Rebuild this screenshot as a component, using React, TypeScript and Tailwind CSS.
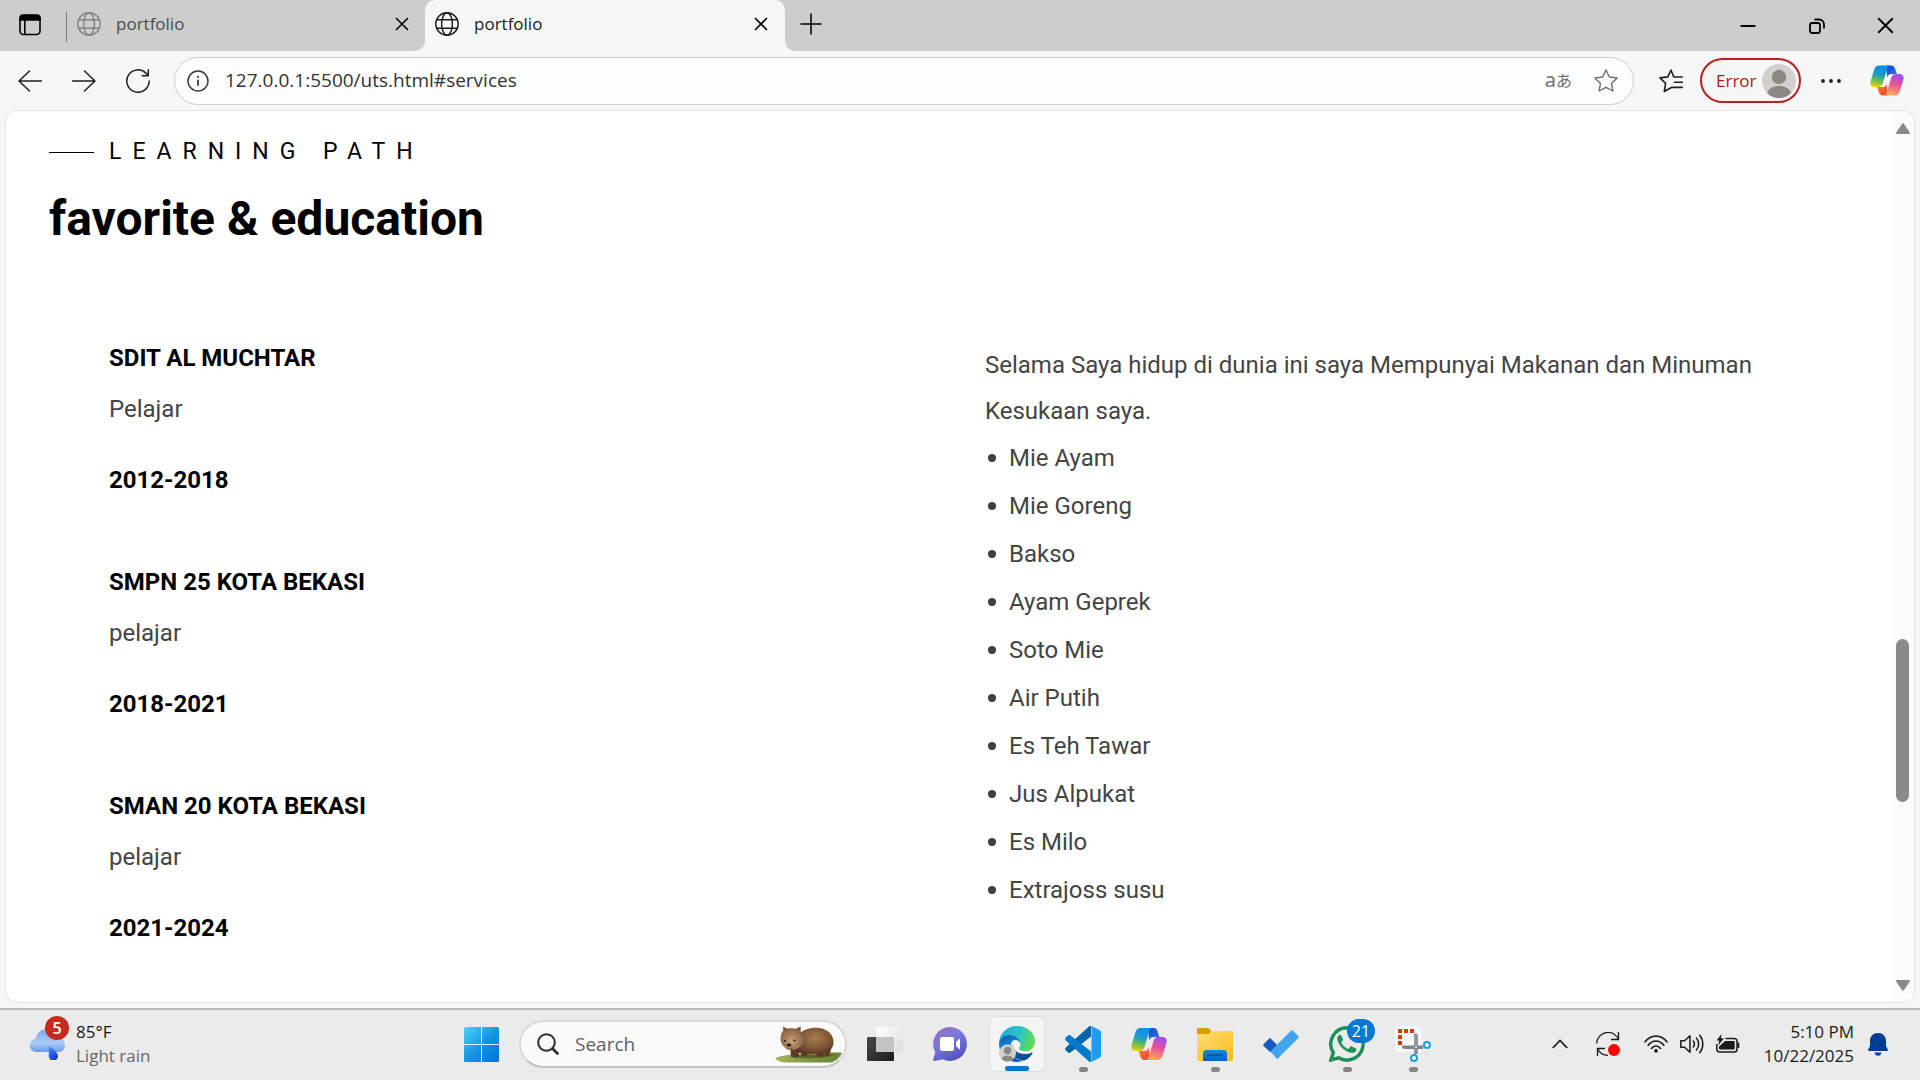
import type { ReactNode } from "react";

const schools = [
  { name: "SDIT AL MUCHTAR", role: "Pelajar", years: "2012-2018" },
  { name: "SMPN 25 KOTA BEKASI", role: "pelajar", years: "2018-2021" },
  { name: "SMAN 20 KOTA BEKASI", role: "pelajar", years: "2021-2024" },
];

const favorites = [
  "Mie Ayam",
  "Mie Goreng",
  "Bakso",
  "Ayam Geprek",
  "Soto Mie",
  "Air Putih",
  "Es Teh Tawar",
  "Jus Alpukat",
  "Es Milo",
  "Extrajoss susu",
];

function GlobeIcon() {
  return (
    <svg viewBox="0 0 24 24" className="size-6 shrink-0" fill="none" stroke="currentColor" strokeWidth="1.4">
      <circle cx="12" cy="12" r="11.2" />
      <ellipse cx="12" cy="12" rx="5.4" ry="11.2" />
      <path d="M1.6 7.8h20.8M1.6 16.2h20.8" />
    </svg>
  );
}

function CrossIcon({ className }: { className: string }) {
  return (
    <svg viewBox="0 0 14 14" className={className} fill="none" stroke="currentColor" strokeWidth="1.6">
      <path d="M1 1l12 12M13 1L1 13" />
    </svg>
  );
}

function CopilotIcon({ className, id }: { className: string; id: string }) {
  return (
    <svg viewBox="0 0 36 32" className={className}>
      <defs>
        <linearGradient id={id + "a"} x1="0.4" y1="0" x2="0.2" y2="1">
          <stop offset="0" stopColor="#0d8fe8" />
          <stop offset="0.4" stopColor="#1a9cc8" />
          <stop offset="0.7" stopColor="#6fbf4a" />
          <stop offset="1" stopColor="#f5d10a" />
        </linearGradient>
        <linearGradient id={id + "b"} x1="0.7" y1="0" x2="0.4" y2="1">
          <stop offset="0" stopColor="#9a4ff2" />
          <stop offset="0.45" stopColor="#e8509a" />
          <stop offset="1" stopColor="#ffab5a" />
        </linearGradient>
        <linearGradient id={id + "c"} x1="0" y1="0" x2="1" y2="1">
          <stop offset="0" stopColor="#1b3fc4" />
          <stop offset="1" stopColor="#2a80e8" />
        </linearGradient>
        <linearGradient id={id + "d"} x1="0" y1="0" x2="1" y2="1">
          <stop offset="0" stopColor="#ff8a3c" />
          <stop offset="1" stopColor="#e63a2a" />
        </linearGradient>
      </defs>
      <path d="M17 0h5.500c2.500 0 3.500 1.600 4.200 3.800l1.700 5.200H23c-3 0-4 1-4.800 3.500z" fill={`url(#${id}c)`} />
      <path d="M19 32h-5.500c-2.500 0-3.500-1.600-4.200-3.800L7.600 23H13c3 0 4-1 4.800-3.500z" fill={`url(#${id}d)`} />
      <path d="M9.500 0H22c-2 0-3 1.400-3.700 3.600L13.500 19c-.8 2.600-2 4-4.500 4H4.500C1 23-.3 20 .7 16.500L4.600 4C5.400 1.300 7 0 9.500 0z" fill={`url(#${id}a)`} />
      <path d="M26.500 32H14c2 0 3-1.400 3.700-3.600L22.500 13c.8-2.600 2-4 4.500-4h4.500c3.500 0 4.800 3 3.800 6.500L31.400 28c-.8 2.700-2.400 4-4.900 4z" fill={`url(#${id}b)`} />
    </svg>
  );
}

function Avatar({ className }: { className: string }) {
  return (
    <svg viewBox="0 0 34 34" className={className}>
      <circle cx="17" cy="17" r="17" fill="#d3d1cd" />
      <circle cx="17" cy="13" r="7.200" fill="#8b8783" />
      <path d="M5 29c1.500-4.500 6-7 12-7s10.500 2.500 12 7c-3 3.200-7.500 5-12 5s-9-1.800-12-5z" fill="#8b8783" />
    </svg>
  );
}

function TabStrip() {
  return (
    <header className="flex h-[51px] shrink-0 items-stretch bg-[#cdcdcd]">
      <button aria-label="Tab actions" className="ml-[18px] flex w-12 items-center pb-0.5">
        <svg viewBox="0 0 24 24" className="size-6" fill="none" stroke="#000" strokeWidth="1.600">
          <rect x="2" y="2.500" width="20" height="19" rx="3.500" />
          <path d="M2 7V5a3 3 0 0 1 3-3h14a3 3 0 0 1 3 3v2z" fill="#000" />
          <path d="M6.800 7v14" />
        </svg>
      </button>
      <div className="mt-3 h-[30px] w-px bg-[#7a7a7a]" />
      <div className="flex w-[358px] items-center pb-1 pl-2.5 pr-4 text-[#4b4b4b]">
        <span className="text-[#848484]">
          <GlobeIcon />
        </span>
        <span className="ml-[15px] flex-1 text-[17px]">portfolio</span>
        <button aria-label="Close tab" className="text-black">
          <CrossIcon className="size-[14px]" />
        </button>
      </div>
      <div className="relative flex w-[360px] items-center rounded-t-[10px] bg-[#f7f7f7] pb-1 pl-2.5 pr-[17px] text-[#1b1b1b]">
        <div className="absolute -left-2.5 bottom-0 size-2.5 bg-[#f7f7f7]">
          <div className="size-full rounded-br-[10px] bg-[#cdcdcd]" />
        </div>
        <div className="absolute -right-2.5 bottom-0 size-2.5 bg-[#f7f7f7]">
          <div className="size-full rounded-bl-[10px] bg-[#cdcdcd]" />
        </div>
        <GlobeIcon />
        <span className="ml-[15px] flex-1 text-[17px]">portfolio</span>
        <button aria-label="Close tab" className="text-black">
          <CrossIcon className="size-[14px]" />
        </button>
      </div>
      <button aria-label="New tab" className="ml-[15px] flex items-center pb-1">
        <svg viewBox="0 0 22 22" className="size-[22px]" stroke="#000" strokeWidth="1.500">
          <path d="M11 .5v21M.5 11h21" />
        </svg>
      </button>
      <div className="ml-auto flex items-center">
        <button aria-label="Minimize" className="flex w-[69px] justify-center">
          <svg viewBox="0 0 16 16" className="size-4" stroke="#000" strokeWidth="2">
            <path d="M.5 8h15" />
          </svg>
        </button>
        <button aria-label="Restore" className="flex w-[69px] justify-center">
          <svg viewBox="0 0 16 16" className="size-4" fill="none" stroke="#000" strokeWidth="1.800">
            <rect x="1" y="5" width="10" height="10" rx="2.200" />
            <path d="M5.500 1.500H10A5 5 0 0 1 15 6.500V10.500" />
          </svg>
        </button>
        <button aria-label="Close" className="flex w-[69px] justify-center">
          <CrossIcon className="size-[17px]" />
        </button>
      </div>
    </header>
  );
}

function Toolbar() {
  return (
    <nav className="flex h-[59px] shrink-0 items-center bg-[#f7f7f7] pl-[18px] text-[#1f1f1f]">
      <button aria-label="Back">
        <svg viewBox="0 0 24 24" className="size-6" fill="none" stroke="currentColor" strokeWidth="1.500" strokeLinecap="round" strokeLinejoin="round">
          <path d="M23.500 12H1M11.500 2L1 12l10.500 10" />
        </svg>
      </button>
      <button aria-label="Forward" className="ml-[30px]">
        <svg viewBox="0 0 24 24" className="size-6" fill="none" stroke="currentColor" strokeWidth="1.500" strokeLinecap="round" strokeLinejoin="round">
          <path d="M.5 12H23M12.500 2L23 12 12.500 22" />
        </svg>
      </button>
      <button aria-label="Refresh" className="ml-[30px]">
        <svg viewBox="0 0 24 24" className="size-6" fill="none" stroke="currentColor" strokeWidth="1.500" strokeLinecap="round" strokeLinejoin="round">
          <path d="M23.200 12A11.200 11.200 0 1 1 20 4.200L22.200 6.500M22.300.8v5.900h-6" />
        </svg>
      </button>
      <div className="ml-6 flex h-12 flex-1 items-center rounded-full border border-[#cfcfcf] bg-[#fdfdfd] pl-3 pr-[15px]">
        <button aria-label="Site information">
          <svg viewBox="0 0 22 22" className="size-[22px]" fill="none" stroke="#3a3a3a" strokeWidth="1.500">
            <circle cx="11" cy="11" r="10" />
            <path d="M11 9.800v6" strokeWidth="1.800" />
            <circle cx="11" cy="6.800" r="1.100" fill="#3a3a3a" stroke="none" />
          </svg>
        </button>
        <input
          aria-label="Address"
          defaultValue="127.0.0.1:5500/uts.html#services"
          className="ml-4 min-w-0 flex-1 bg-transparent text-[19px] text-[#333] outline-none"
        />
        <button aria-label="Translate" className="flex items-baseline font-['Noto_Sans','Noto_Sans_CJK_JP',sans-serif] leading-6 text-[#6e6e6e]">
          <span className="text-[20px]">a</span>
          <span className="text-[16px]">あ</span>
        </button>
        <button aria-label="Add to favorites" className="ml-[22px]">
          <svg viewBox="0 0 24 24" className="size-6" fill="none" stroke="#6e6e6e" strokeWidth="1.400" strokeLinejoin="round">
            <path d="M12 1l3.400 7 7.700 1-5.600 5.400 1.400 7.600-6.900-3.700L5.100 22l1.400-7.600L.9 9l7.700-1z" />
          </svg>
        </button>
      </div>
      <button aria-label="Favorites" className="ml-[25px]">
        <svg viewBox="0 0 24 24" className="size-6" fill="none" stroke="currentColor" strokeWidth="1.600" strokeLinecap="round" strokeLinejoin="round">
          <path d="M15.500 7.800l-.9-.1L12 1 8.800 7.900 1 8.900l5.600 5.400L5.300 22.500l6.700-3.800M15.500 8H23.300M15.500 13.200H23.300M12.500 18.400H23.300" />
        </svg>
      </button>
      <button className="ml-[17px] flex h-[45px] w-[101px] items-center justify-between rounded-full border-2 border-[#b81f1f] pl-[14px] pr-[3px] text-[17px] text-[#b01818]">
        Error
        <Avatar className="size-[34px]" />
      </button>
      <button aria-label="Settings and more" className="ml-5">
        <svg viewBox="0 0 20 4" className="h-1 w-5" fill="#1f1f1f">
          <circle cx="2" cy="2" r="1.900" />
          <circle cx="10" cy="2" r="1.900" />
          <circle cx="18" cy="2" r="1.900" />
        </svg>
      </button>
      <button aria-label="Copilot" className="ml-[29px] mr-4">
        <CopilotIcon className="h-[31px] w-[34px]" id="bar" />
      </button>
    </nav>
  );
}

function Page() {
  return (
    <main className="flex min-h-0 flex-1 bg-[#f7f7f7] px-[5px] pb-[5px]">
      <div className="flex flex-1 overflow-hidden rounded-[12px] border border-[#e4e4e4] bg-white font-[Roboto,sans-serif]">
        <section className="flex-1 pl-[43px] pr-[30px] pt-6">
          <div className="flex items-center gap-[15px]">
            <div className="h-px w-[45px] bg-black" />
            <p className="text-[23px] leading-[34px] tracking-[11px] text-black">LEARNING PATH</p>
          </div>
          <h1 className="mt-5 text-[48px] font-bold leading-[60px] text-black">favorite &amp; education</h1>
          <div className="mt-[91px] grid grid-cols-2 pl-[60px] text-[24px]">
            <div className="flex flex-col gap-[66px]">
              {schools.map((s) => (
                <article key={s.name}>
                  <h2 className="font-bold leading-[36px] text-black">{s.name}</h2>
                  <p className="mt-2.5 leading-[46px] text-[#444]">{s.role}</p>
                  <h3 className="mt-[30px] font-bold leading-[36px] text-black">{s.years}</h3>
                </article>
              ))}
            </div>
            <div className="pr-10 pt-0.5 text-[#444]">
              <p className="leading-[46px]">Selama Saya hidup di dunia ini saya Mempunyai Makanan dan Minuman Kesukaan saya.</p>
              <ul className="leading-[48px]">
                {favorites.map((f) => (
                  <li
                    key={f}
                    className="flex items-center before:ml-[3px] before:mr-[13px] before:size-2 before:rounded-full before:bg-[#3f3f3f]"
                  >
                    {f}
                  </li>
                ))}
              </ul>
            </div>
          </div>
        </section>
        <div className="flex w-[23px] flex-col items-center bg-[#fcfcfc] pb-[11px] pt-3">
          <button aria-label="Scroll up">
            <svg viewBox="0 0 14 11" className="h-[11px] w-[14px]" fill="#8a8a8a" stroke="#8a8a8a" strokeWidth="2" strokeLinejoin="round">
              <path d="M7 1.200L13 10H1z" />
            </svg>
          </button>
          <div className="flex w-[13px] flex-1 flex-col">
            <div className="flex-[503]" />
            <div className="flex-[162] rounded-full bg-[#8a8a8a]" />
            <div className="flex-[177]" />
          </div>
          <button aria-label="Scroll down">
            <svg viewBox="0 0 14 11" className="h-[11px] w-[14px]" fill="#8a8a8a" stroke="#8a8a8a" strokeWidth="2" strokeLinejoin="round">
              <path d="M7 9.800L1 1h12z" />
            </svg>
          </button>
        </div>
      </div>
    </main>
  );
}

function TaskbarApp({ label, state, children }: { label: string; state?: "active" | "running"; children: ReactNode }) {
  return (
    <button
      aria-label={label}
      className={
        state === "active"
          ? "relative flex size-14 items-center justify-center rounded-[6px] border border-[#dedede] bg-[#f4f4f4]"
          : "relative flex size-14 items-center justify-center"
      }
    >
      {children}
      {state === "active" && <span className="absolute bottom-0 h-[5px] w-6 rounded-full bg-[#0078d4]" />}
      {state === "running" && <span className="absolute bottom-0 h-[5px] w-[9px] rounded-full bg-[#868686]" />}
    </button>
  );
}

function Wombat() {
  return (
    <svg viewBox="0 0 67 37" className="h-[37px] w-[67px]">
      <defs>
        <radialGradient id="fur" cx="0.5" cy="0.4" r="0.65">
          <stop offset="0" stopColor="#a97c50" />
          <stop offset="0.6" stopColor="#7f5735" />
          <stop offset="1" stopColor="#553520" />
        </radialGradient>
        <radialGradient id="face" cx="0.5" cy="0.6" r="0.6">
          <stop offset="0" stopColor="#c9a27c" />
          <stop offset="1" stopColor="#85603f" />
        </radialGradient>
        <linearGradient id="grass" x1="0" y1="0" x2="1" y2="0">
          <stop offset="0" stopColor="#a9b559" />
          <stop offset="0.5" stopColor="#7c9440" />
          <stop offset="1" stopColor="#6b8433" />
        </linearGradient>
      </defs>
      <path d="M0 32c8-3 18-4 30-4.500 14-.7 26-1.500 37-.8-2 4.500-6 8.300-11 9.800H12C6 36.500 2 35 0 32z" fill="url(#grass)" />
      <path d="M14 31c8-2.500 38-3 46-2-6 3-36 4.500-46 2z" fill="#3f4a1c" opacity="0.600" />
      <path d="M15 20h8l1 10c-2 1.600-6 1.600-8 0zM26 21h6l.5 8.500c-1.500 1.200-4 1.200-6 .5zM41 21h8l-.5 9c-2 1.500-5 1.500-7 0zM50 19h7l-2.500 10c-1.500 1.200-3.500 1-5 .3z" fill="#5c3a22" />
      <path d="M24 8c5-5 13-7 20-6 9 1 14.500 7 14.500 14 0 7-5 11-13 11.500-9 .8-19 .8-24-1.500z" fill="url(#fur)" />
      <path d="M8.500 6L8 .8l5 2.500zM21 3l4.500-2.500L25.500 6z" fill="#6c4b33" stroke="#a98465" strokeWidth="0.600" />
      <path d="M9 4c4-2.500 12-2.500 15.500.3C28 8 29 14 27 18.500c-2 4-7 6-12 5C9 22.500 5.500 18 5.500 13 5.500 9 6.500 6 9 4z" fill="url(#face)" />
      <circle cx="9.800" cy="15" r="1.100" fill="#2b1a10" />
      <circle cx="19.500" cy="14.500" r="1.100" fill="#2b1a10" />
      <ellipse cx="14" cy="19" rx="2.300" ry="1.600" fill="#2b1a10" />
      <path d="M11 22.500c2 1 4.500 1 6.500-.3" fill="none" stroke="#5c3a22" strokeWidth="0.800" />
    </svg>
  );
}

function EdgeIcon() {
  return (
    <svg viewBox="0 0 36 36" className="size-9">
      <defs>
        <linearGradient id="edgeTop" x1="0" y1="0.3" x2="1" y2="0.6">
          <stop offset="0" stopColor="#1fa7d8" />
          <stop offset="0.5" stopColor="#2cc3c9" />
          <stop offset="1" stopColor="#63dc4a" />
        </linearGradient>
        <linearGradient id="edgeMid" x1="0" y1="0" x2="0.4" y2="1">
          <stop offset="0" stopColor="#0c59a4" />
          <stop offset="0.5" stopColor="#0f86dc" />
          <stop offset="1" stopColor="#1160b8" />
        </linearGradient>
      </defs>
      <path d="M0 18C0 7.500 8 0 18 0c10.500 0 18 7 18 15.500 0 6-4.500 9.700-9.500 9.700-4 0-6.500-1.200-6.500-2.700 0-1 1.500-1.700 1.500-4.300C21.500 13 17 9 11 9 5 9 .8 12.500 0 18z" fill="url(#edgeTop)" />
      <path d="M0 18C.8 12.300 5 9 11 9c6.200 0 10.500 4.200 10.500 9.200-1-3-3-4.200-5.200-4.200-3 0-4.800 3-4.800 7C11.500 28.500 17 34 23.500 35c-1.700.7-3.600 1-5.500 1C8 36 0 28 0 18z" fill="url(#edgeMid)" />
      <path d="M11.500 21c0 8 6.500 14 14 13.600 3.500-1.600 6.300-4.200 8-7.400.3-.7-.2-1.100-.8-.8-2 1-4.300 1.600-6.700 1.600-6.500 0-12-3.500-12.700-9-1 .5-1.800 1.200-1.800 2z" fill="#114c96" />
      <g transform="translate(0 18.500) scale(0.5)">
        <circle cx="17" cy="17" r="17" fill="#d3d1cd" />
        <circle cx="17" cy="12" r="7.500" fill="#8b8783" />
        <path d="M5 29c1.500-4.500 6-7 12-7s10.500 2.500 12 7c-3 3.200-7.500 5-12 5s-9-1.800-12-5z" fill="#8b8783" />
      </g>
    </svg>
  );
}

function Taskbar() {
  return (
    <footer className="grid h-[72px] shrink-0 grid-cols-[1fr_auto_1fr] border-t-2 border-[#bababa] bg-[#ebebeb] pb-0.5">
      <button className="flex items-center pl-[29px] text-left">
        <span className="relative">
          <svg viewBox="0 0 36 32" className="h-8 w-9">
            <defs>
              <linearGradient id="cloud" x1="0" y1="0" x2="0" y2="1">
                <stop offset="0" stopColor="#7ea6ea" />
                <stop offset="0.6" stopColor="#a9cbf8" />
                <stop offset="1" stopColor="#6f9be6" />
              </linearGradient>
              <linearGradient id="drop" x1="0" y1="0" x2="0.6" y2="1">
                <stop offset="0" stopColor="#3f9bf5" />
                <stop offset="1" stopColor="#1632e0" />
              </linearGradient>
            </defs>
            <path d="M7 24a7 6.700 0 0 1-.5-13.300C8 5 12 1 17 1c5.500 0 9 3.500 10.500 8.500C32.500 9.500 36 12.500 36 17s-3 7-7 7z" fill="url(#cloud)" />
            <path d="M20 18c3 2.500 9 6.500 9 10a4.600 4.600 0 0 1-9.300 0z" fill="url(#drop)" />
          </svg>
          <span className="absolute -top-3 left-4 flex size-6 items-center justify-center rounded-full bg-[#c42b1c] text-[16px] font-semibold text-white">5</span>
        </span>
        <span className="ml-[11px] flex flex-col text-[17px] leading-6">
          <span className="text-[#1b1b1b]">85°F</span>
          <span className="text-[#666]">Light rain</span>
        </span>
      </button>

      <div className="flex items-center gap-2.5 pr-[26px]">
        <TaskbarApp label="Start">
          <svg viewBox="0 0 35 35" className="size-[35px]">
            <defs>
              <linearGradient id="win" gradientUnits="userSpaceOnUse" x1="0" y1="0" x2="35" y2="35">
                <stop offset="0" stopColor="#4fd3fe" />
                <stop offset="0.5" stopColor="#1695e3" />
                <stop offset="1" stopColor="#0072d0" />
              </linearGradient>
            </defs>
            <path d="M1.500 0H17v17H0V1.500A1.500 1.500 0 0 1 1.500 0zM18 0h15.500A1.500 1.500 0 0 1 35 1.500V17H18zM0 18h17v17H1.500A1.500 1.500 0 0 1 0 33.500zM18 18h17v15.500a1.500 1.500 0 0 1-1.500 1.500H18z" fill="url(#win)" />
          </svg>
        </TaskbarApp>
        <label className="flex h-12 w-[328px] items-center rounded-full border-2 border-[#dadada] border-b-[#c2c2c2] bg-[#fafafa] pl-4 pr-[3px]">
          <svg viewBox="0 0 22 22" className="size-[22px] shrink-0" fill="none" stroke="#2b2b2b" strokeLinecap="round">
            <circle cx="9.500" cy="9.500" r="8.300" strokeWidth="2" />
            <path d="M15.500 15.500l5 5" strokeWidth="2.600" />
          </svg>
          <input aria-label="Search" placeholder="Search" className="ml-4 min-w-0 flex-1 bg-transparent text-[19px] outline-none placeholder:text-[#5f5f5f]" />
          <Wombat />
        </label>
        <TaskbarApp label="Task view">
          <svg viewBox="0 0 36 34" className="h-[34px] w-9">
            <defs>
              <linearGradient id="tvd" x1="0" y1="0" x2="1" y2="1">
                <stop offset="0" stopColor="#4a4846" />
                <stop offset="1" stopColor="#1c1c1c" />
              </linearGradient>
              <linearGradient id="tvl" x1="0" y1="0" x2="1" y2="1">
                <stop offset="0" stopColor="#fff" />
                <stop offset="1" stopColor="#dcdcdc" />
              </linearGradient>
            </defs>
            <rect x="0" y="10" width="27" height="24" rx="1" fill="url(#tvd)" />
            <rect x="9" y="0" width="27" height="25" rx="1" fill="url(#tvl)" />
            <rect x="9" y="10" width="18" height="15" fill="#c3c3c3" />
          </svg>
        </TaskbarApp>
        <TaskbarApp label="Chat">
          <svg viewBox="0 0 36 34" className="h-[34px] w-9">
            <defs>
              <linearGradient id="chat" x1="0.1" y1="0" x2="0.6" y2="1">
                <stop offset="0" stopColor="#9a6aa8" />
                <stop offset="0.4" stopColor="#7c7be0" />
                <stop offset="1" stopColor="#5452c4" />
              </linearGradient>
            </defs>
            <path d="M17 0a17 17 0 1 1-7.500 32.300L1.500 34c-.9.200-1.600-.6-1.300-1.500l2-7.300A17 17 0 0 1 17 0z" fill="url(#chat)" />
            <rect x="7" y="10" width="14" height="14" rx="2" fill="#fff" />
            <path d="M23 15l3.300-3.300c.4-.4.700-.2.700.3v10c0 .5-.3.700-.7.300L23 19z" fill="#fff" />
          </svg>
        </TaskbarApp>
        <TaskbarApp label="Microsoft Edge" state="active">
          <EdgeIcon />
        </TaskbarApp>
        <TaskbarApp label="Visual Studio Code" state="running">
          <svg viewBox="0 0 36 36" className="size-9">
            <path d="M26 0v10.500L5.500 26.500c-.8.600-1.800.6-2.500 0L.8 24.500c-.9-.8-.9-2.200 0-3L24 .6c.6-.5 1.300-.7 2-.6z" fill="#0065a9" />
            <path d="M26 36V25.500L5.500 9.500c-.8-.6-1.800-.6-2.500 0L.8 11.500c-.9.800-.9 2.200 0 3L24 35.400c.6.500 1.300.7 2 .6z" fill="#007acc" />
            <path d="M26.500 35.800c-.8.300-1.800.1-2.500-.6.900.9 2.500.2 2.500-1.100V1.900C26.500.6 24.900-.1 24 .8c.7-.7 1.700-.9 2.500-.6L34 3.800c1.200.6 2 1.800 2 3.200v22c0 1.400-.8 2.600-2 3.200z" fill="#1f9cf0" />
          </svg>
        </TaskbarApp>
        <TaskbarApp label="Copilot">
          <CopilotIcon className="h-[34px] w-9" id="task" />
        </TaskbarApp>
        <TaskbarApp label="File Explorer" state="running">
          <svg viewBox="0 0 36 33" className="h-[33px] w-9">
            <defs>
              <linearGradient id="folder" x1="0" y1="0" x2="1" y2="1">
                <stop offset="0" stopColor="#ffdf72" />
                <stop offset="1" stopColor="#fcba1c" />
              </linearGradient>
              <linearGradient id="tray" x1="0" y1="0" x2="0" y2="1">
                <stop offset="0" stopColor="#1687d8" />
                <stop offset="1" stopColor="#0a62b4" />
              </linearGradient>
            </defs>
            <path d="M0 1.200C0 .5.500 0 1.200 0h9.600c.6 0 1 .2 1.400.6L15 4v4H0z" fill="#dd9a08" />
            <path d="M0 6h11c.6 0 1-.2 1.400-.6L14 3.600c.4-.4.800-.6 1.400-.6h19.400c.7 0 1.200.5 1.200 1.200v27.600c0 .7-.5 1.200-1.200 1.200H1.200C.5 33 0 32.500 0 31.800z" fill="url(#folder)" />
            <path d="M6 33v-7.500A3.500 3.500 0 0 1 9.500 22h17a3.500 3.500 0 0 1 3.500 3.500V33z" fill="url(#tray)" />
            <path d="M11 27.200h14" stroke="#0a4a8c" strokeWidth="1.600" strokeLinecap="round" />
          </svg>
        </TaskbarApp>
        <TaskbarApp label="To Do">
          <svg viewBox="0 0 36 29" className="h-[29px] w-9">
            <path d="M.6 14.200L6 8.800c.6-.6 1.300-.6 1.900 0l6.800 6.700-7 7L.6 16c-.6-.6-.6-1.200 0-1.800z" fill="#185abd" />
            <path d="M7.500 21.200L28 .7c.6-.6 1.300-.6 1.900 0l5.400 5.400c.6.600.6 1.300 0 1.900L15.100 28.200c-.6.600-1.300.6-1.900 0z" fill="#41a5ee" />
          </svg>
        </TaskbarApp>
        <TaskbarApp label="WhatsApp" state="running">
          <svg viewBox="0 0 36 36" className="size-9">
            <path d="M18 1.700A16.200 16.200 0 0 0 4.300 26.500L1.900 34l7.700-2.200A16.200 16.200 0 1 0 18 1.700z" fill="none" stroke="#1d8f57" strokeWidth="3.400" />
            <path d="M12.300 9.500c-.5-.9-1-.9-1.600-.8C9 9.200 8 11.300 8.400 13.600c.9 5.800 7.500 12.400 13.800 13.200 2.600.3 4.600-.9 5.100-2.900.2-.9 0-1.300-.8-1.700l-3.700-1.800c-.7-.3-1.200-.2-1.600.4l-1.300 1.700c-.4.500-.9.500-1.500.2-2.600-1.200-4.600-3.100-6-5.600-.3-.6-.2-1 .2-1.400l1.100-1.300c.4-.5.4-.9.2-1.400z" fill="#1d8f57" />
          </svg>
          <span className="absolute left-7 top-[3px] flex h-6 w-7 items-center justify-center rounded-full bg-[#0078d4] text-[16px] text-white">21</span>
        </TaskbarApp>
        <TaskbarApp label="Snipping Tool" state="running">
          <svg viewBox="0 0 36 36" className="size-9">
            <rect x="0" y="0" width="26" height="26" rx="2" fill="#f7f7f7" />
            <path d="M3 3h4v4H3zM9 3h4v4H9zM15 3h4v4h-4zM3 9h4v4H3zM3 15h4v4H3z" fill="#d83b01" />
            <path d="M19.500 7.500h1.500a2 2 0 0 1 2 2V28h-4V8z" fill="#9096a0" />
            <path d="M7 19.500h21v3.500H9.500a2.500 2.500 0 0 1-2.500-2.500z" fill="#7d838c" />
            <circle cx="21" cy="21" r="1.200" fill="#d8dade" />
            <circle cx="32" cy="19" r="3" fill="#fff" stroke="#1a9fe0" strokeWidth="2" />
            <circle cx="19" cy="32" r="3" fill="#fff" stroke="#1a9fe0" strokeWidth="2" />
          </svg>
        </TaskbarApp>
      </div>

      <div className="flex items-center justify-end pr-8 text-[#1b1b1b]">
        <button aria-label="Show hidden icons">
          <svg viewBox="0 0 16 10" className="h-2.5 w-4" fill="none" stroke="currentColor" strokeWidth="1.800">
            <path d="M.8 9L8 1.500 15.200 9" />
          </svg>
        </button>
        <button aria-label="Windows Update" className="ml-7">
          <svg viewBox="0 0 24 24" className="size-6" fill="none" stroke="currentColor" strokeWidth="1.300">
            <path d="M.7 11.500A11.300 11.300 0 0 1 22.500 7.500M22.500 0v7.500H15M12 23.300A11.300 11.300 0 0 1 1.500 16.500M1.500 24v-7.500H9" />
            <circle cx="18" cy="18" r="6" fill="#f00" stroke="none" />
          </svg>
        </button>
        <button aria-label="Network, volume and battery" className="ml-6 flex items-center gap-3">
          <svg viewBox="0 0 24 18" className="h-[18px] w-6" fill="none" stroke="currentColor" strokeWidth="1.700" strokeLinecap="round">
            <path d="M1 6.800C7-.9 17-.9 23 6.800M4.200 10.200c4.300-5.600 11.300-5.600 15.600 0M7.500 13.400c2.500-3.200 6.500-3.200 9 0" />
            <circle cx="12" cy="15.800" r="1.900" fill="currentColor" stroke="none" />
          </svg>
          <svg viewBox="0 0 24 20" className="h-5 w-6" fill="none" stroke="currentColor" strokeWidth="1.500" strokeLinejoin="round" strokeLinecap="round">
            <path d="M.8 6.800h3.700L10 1.800v16.400l-5.500-5H.8z" />
            <path d="M13.300 7a5 5 0 0 1 0 6M16.500 4a9.500 9.500 0 0 1 0 12M19.700 1.200a14 14 0 0 1 0 17.600" />
          </svg>
          <svg viewBox="0 0 24 20" className="h-5 w-6" fill="none" stroke="currentColor" strokeWidth="1.500">
            <path d="M9.500 4.500h8.700a2.800 2.800 0 0 1 2.800 2.800v7.900a2.800 2.800 0 0 1-2.800 2.800H3.500A2.800 2.800 0 0 1 .8 15.200V10" />
            <path d="M9 7h8.500a1.200 1.200 0 0 1 1.200 1.200v6.100a1.200 1.200 0 0 1-1.200 1.200H4.300A1.200 1.200 0 0 1 3 14.300V12.500z" fill="currentColor" stroke="none" />
            <path d="M21.500 8.500H23.300v5.500h-1.800z" fill="currentColor" stroke="none" />
            <path d="M5.500 0L.5 6.500h2.700L2.200 11.500 8 4.300H5z" fill="currentColor" stroke="none" />
          </svg>
        </button>
        <button className="ml-6 flex flex-col text-right text-[17px] leading-6">
          <span>5:10 PM</span>
          <span>10/22/2025</span>
        </button>
        <button aria-label="Notifications" className="ml-[14px]">
          <svg viewBox="0 0 20 23" className="h-[23px] w-5" fill="#003e92">
            <path d="M10 0c-4.800 0-8 3.500-8 8v5L.2 16.500c-.4.800 0 1.500.8 1.500h18c.8 0 1.200-.7.800-1.500L18 13V8c0-4.500-3.200-8-8-8zM6.500 19.500h7c-.4 2-1.700 3.300-3.500 3.300s-3.100-1.300-3.500-3.300z" />
          </svg>
        </button>
      </div>
    </footer>
  );
}

export default function App() {
  return (
    <div className="flex h-screen flex-col overflow-hidden bg-[#f7f7f7] font-['Open_Sans','Noto_Sans',sans-serif]">
      <TabStrip />
      <Toolbar />
      <Page />
      <Taskbar />
    </div>
  );
}
